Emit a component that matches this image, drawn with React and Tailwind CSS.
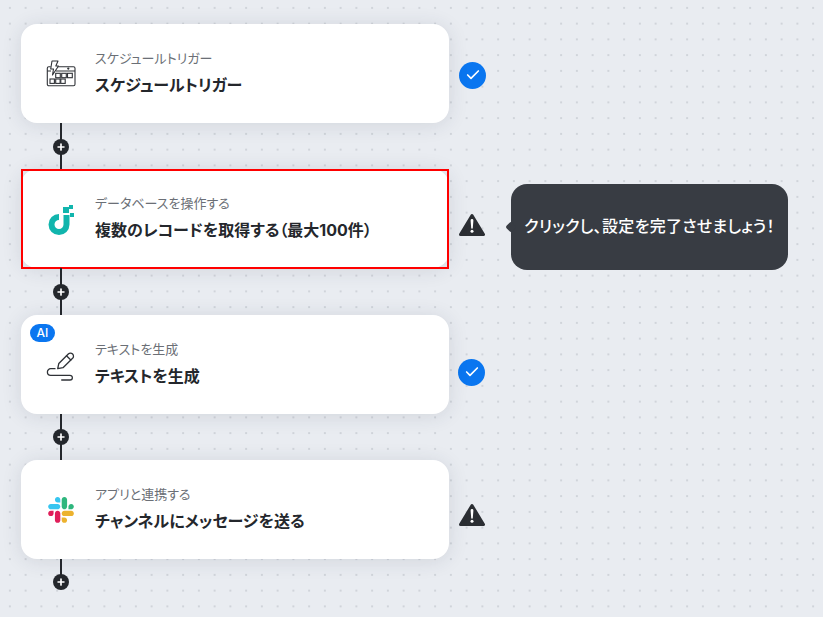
import { Check, Plus } from 'lucide-react';

const font = "font-['Inter','Noto_Sans_CJK_JP',sans-serif] [font-feature-settings:'palt']";

function ScheduleIcon() {
  return (
    <svg width="32" height="32" viewBox="0 0 32 32" fill="none" stroke="#2f3237" strokeWidth="1.1">
      <path d="M12 8.7H28.5a1.5 1.5 0 0 1 1.5 1.5V26.2a1.5 1.5 0 0 1-1.5 1.5H3.8a1.5 1.5 0 0 1-1.5-1.5V10.2a1.5 1.5 0 0 1 1.5-1.5H5.7" />
      <path d="M2.3 13H6M11 13H30" />
      <path d="M7 3H13L10.8 8H13.5L7.5 17L8.5 11H5.7z" fill="#fff" strokeLinejoin="round" />
      <rect x="10.7" y="15.3" width="4.6" height="4.4" />
      <rect x="16.7" y="15.3" width="4.6" height="4.4" />
      <rect x="22.5" y="15.3" width="4.8" height="4.4" />
      <rect x="5" y="21" width="4.4" height="4.4" />
      <rect x="10.7" y="21" width="4.4" height="4.4" />
      <rect x="15.8" y="21" width="4.4" height="4.4" />
      <circle cx="23.3" cy="10.6" r="0.6" fill="#2f3237" />
    </svg>
  );
}

function DatabaseIcon() {
  return (
    <svg width="32" height="32" viewBox="0 0 32 32" fill="#11b5ad">
      <path d="M14 14A7.5 7.5 0 1 0 21.5 21.5V12" fill="none" stroke="#11b5ad" strokeWidth="6" />
      <rect x="18" y="4" width="6" height="6" />
      <rect x="24" y="2" width="4" height="4" />
      <rect x="25" y="10" width="4" height="4" />
    </svg>
  );
}

function PenIcon() {
  return (
    <svg width="32" height="32" viewBox="0 0 32 32" fill="none" stroke="#2f3237" strokeWidth="1.3" strokeLinecap="round" strokeLinejoin="round">
      <path d="M12.7 19.7L13.8 14.5L23.3 5A3 3 0 0 1 27.6 9.3L18 18.7Z" />
      <path d="M21.5 6.8L25.8 11" />
      <path d="M10 19.7H5.7a3.3 3.3 0 0 0 0 6.6H25a2.3 2.3 0 0 1 0 4.7H16.7" />
    </svg>
  );
}

function SlackIcon() {
  return (
    <svg width="26" height="26" viewBox="0 0 127 127">
      <path d="M27.2 80c0 7.3-5.9 13.2-13.2 13.2C6.7 93.2.8 87.3.8 80c0-7.3 5.9-13.2 13.2-13.2h13.2V80zm6.6 0c0-7.3 5.9-13.2 13.2-13.2 7.3 0 13.2 5.9 13.2 13.2v33c0 7.3-5.9 13.2-13.2 13.2-7.3 0-13.2-5.9-13.2-13.2V80z" fill="#E01E5A" />
      <path d="M47 27c-7.3 0-13.2-5.9-13.2-13.2C33.8 6.5 39.7.6 47 .6c7.3 0 13.2 5.9 13.2 13.2V27H47zm0 6.7c7.3 0 13.2 5.9 13.2 13.2 0 7.3-5.9 13.2-13.2 13.2H13.9C6.6 60.1.7 54.2.7 46.9c0-7.3 5.9-13.2 13.2-13.2H47z" fill="#36C5F0" />
      <path d="M99.9 46.9c0-7.3 5.9-13.2 13.2-13.2 7.3 0 13.2 5.9 13.2 13.2 0 7.3-5.9 13.2-13.2 13.2H99.9V46.9zm-6.6 0c0 7.3-5.9 13.2-13.2 13.2-7.3 0-13.2-5.9-13.2-13.2V13.8C66.9 6.5 72.8.6 80.1.6c7.3 0 13.2 5.9 13.2 13.2v33.1z" fill="#2EB67D" />
      <path d="M80.1 99.8c7.3 0 13.2 5.9 13.2 13.2 0 7.3-5.9 13.2-13.2 13.2-7.3 0-13.2-5.9-13.2-13.2V99.8h13.2zm0-6.6c-7.3 0-13.2-5.9-13.2-13.2 0-7.3 5.9-13.2 13.2-13.2h33.1c7.3 0 13.2 5.9 13.2 13.2 0 7.3-5.9 13.2-13.2 13.2H80.1z" fill="#ECB22E" />
    </svg>
  );
}

function WarningIcon() {
  return (
    <svg width="26" height="24" viewBox="0 0 26 24" className="block">
      <path d="M13 2.5L24.5 21.5H1.5z" fill="#2b2e33" stroke="#2b2e33" strokeWidth="3" strokeLinejoin="round" />
      <path d="M11.6 7.5a1.4 1.4 0 0 1 2.8 0L13.8 15a.8.8 0 0 1-1.6 0z" fill="#fff" />
      <circle cx="13" cy="18.2" r="1.5" fill="#fff" />
    </svg>
  );
}

function CheckBadge() {
  return (
    <div className="w-[27px] h-[27px] rounded-full bg-[#0a76f0] flex items-center justify-center">
      <Check className="w-4 h-4 text-white" strokeWidth={2.5} />
    </div>
  );
}

function StepCard({ icon, label, title, ai, selected }) {
  return (
    <div className="relative w-[428px] h-[99px] shrink-0 bg-white rounded-2xl shadow-[0_2px_20px_rgba(40,50,70,0.12)] flex items-center pl-[24px]">
      {ai && (
        <div className="absolute left-[9px] top-[9px] w-[25px] h-[18px] rounded-full bg-[#0a76f0] text-white text-[12px] font-medium flex items-center justify-center">
          AI
        </div>
      )}
      <div className="w-8 h-8 flex items-center justify-center shrink-0">{icon}</div>
      <div className="ml-[18px] -mt-[2px] flex flex-col">
        <div className="text-[13px] leading-[18px] text-[#6b6f76]">{label}</div>
        <div className="mt-[7px] text-[16px] leading-[22px] font-bold text-[#24272c]">{title}</div>
      </div>
      {selected && <div className="absolute top-0 -bottom-px inset-x-0 border-2 border-[#ff0000]" />}
    </div>
  );
}

function Connector({ height = 'h-[46px]', top = 'top-[16px]' }) {
  return (
    <div className={`relative w-[428px] ${height}`}>
      <div className="w-[2px] h-full bg-[#24272c] ml-[39px]" />
      <div className={`absolute left-[32px] ${top} w-[16px] h-[16px] rounded-full bg-[#24272c] flex items-center justify-center`}>
        <Plus className="w-[10px] h-[10px] text-white" strokeWidth={4} />
      </div>
    </div>
  );
}

export default function App() {
  return (
    <div className={`${font} w-[823px] h-[617px] overflow-hidden pt-[24px] pl-[21px] bg-[#e9ecf1] bg-[radial-gradient(circle,#d0d4da_1px,transparent_1.5px)] bg-[size:15.75px_15.75px] bg-[position:2px_0px]`}>
      <div className="flex items-center h-[99px]">
        <StepCard icon={<ScheduleIcon />} label="スケジュールトリガー" title="スケジュールトリガー" />
        <div className="ml-[10px] mt-[3px]"><CheckBadge /></div>
      </div>
      <Connector />
      <div className="flex items-center h-[99px]">
        <StepCard icon={<DatabaseIcon />} label="データベースを操作する" title="複数のレコードを取得する（最大100件）" selected />
        <div className="ml-[10px] mt-[13px]"><WarningIcon /></div>
        <div className="ml-[26px] mt-[17px] pb-[2px] relative w-[277px] h-[86px] shrink-0 rounded-2xl bg-[#383c43] flex items-center justify-center text-white text-[16px] font-medium tracking-[0.3px]">
          <div className="absolute -left-[4px] top-[39px] w-[8px] h-[8px] rotate-45 rounded-[2px] bg-[#383c43]" />
          クリックし、設定を完了させましょう！
        </div>
      </div>
      <Connector height="h-[47px]" />
      <div className="flex items-center h-[99px]">
        <StepCard icon={<PenIcon />} label="テキストを生成" title="テキストを生成" ai />
        <div className="ml-[9px] mt-[15px]"><CheckBadge /></div>
      </div>
      <Connector top="top-[15px]" />
      <div className="flex items-center h-[99px]">
        <StepCard icon={<SlackIcon />} label="アプリと連携する" title="チャンネルにメッセージを送る" />
        <div className="ml-[10px] mt-[11px]"><WarningIcon /></div>
      </div>
      <Connector height="h-[23px]" top="top-[15px]" />
    </div>
  );
}
